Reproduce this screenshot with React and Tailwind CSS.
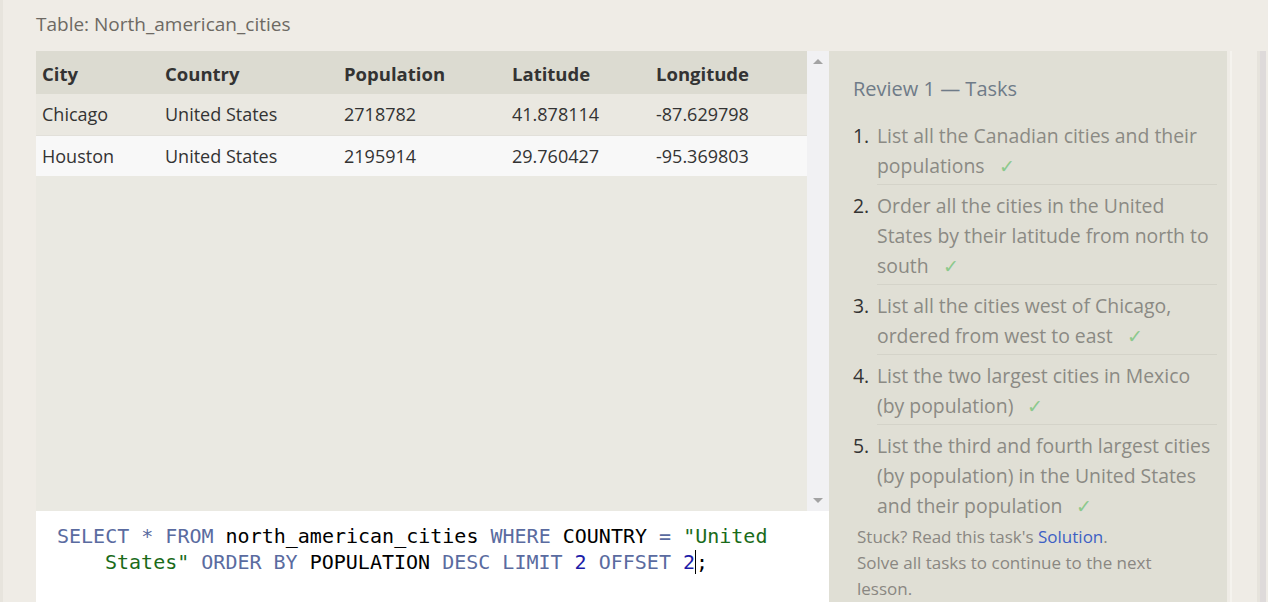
import React from 'react';

const rows = [
    { city: 'Chicago', country: 'United States', population: '2718782', lat: '41.878114', lng: '-87.629798' },
    { city: 'Houston', country: 'United States', population: '2195914', lat: '29.760427', lng: '-95.369803' }
];

const tasks = [
    ['List all the Canadian cities and their', 'populations'],
    ['Order all the cities in the United', 'States by their latitude from north to', 'south'],
    ['List all the cities west of Chicago,', 'ordered from west to east'],
    ['List the two largest cities in Mexico', '(by population)'],
    ['List the third and fourth largest cities', '(by population) in the United States', 'and their population']
];

const colWidths = ['w-[123px]', 'w-[179px]', 'w-[168px]', 'w-[144px]', 'w-[157px]'];

function Check() {
    return <span className="ml-[14px] text-[#8cc98c]">✓</span>;
}

function App() {
    return (
        <div className="flex h-[602px] w-full overflow-hidden bg-[#efece6]" style={{ fontFamily: '"Open Sans", "Noto Sans", sans-serif' }}>
            <div className="w-[3px] bg-[#e7e4dd]"></div>
            <div className="flex-1 pl-[33px]">
                <div className="h-[51px] pt-[9px] text-[19px] leading-[30px] text-[#6d6963]">Table: North_american_cities</div>
                <div className="flex">
                    <div className="flex w-[793px] flex-col">
                        <div className="flex h-[460px]">
                            <div className="w-[771px] bg-[#eae9e2] text-[18px] text-[#333]">
                                <div className="flex h-[43px] items-center bg-[#dcdbd1] pt-[3px] text-[18.5px] font-bold">
                                    {['City', 'Country', 'Population', 'Latitude', 'Longitude'].map((h, i) => (
                                        <div key={h} className={`${colWidths[i]} pl-[6px]`}>{h}</div>
                                    ))}
                                </div>
                                {rows.map((r, idx) => (
                                    <div key={r.city} className={`flex h-[41px] items-center ${idx === 1 ? 'border-t border-[#e2e0da] bg-[#f8f8f8]' : 'bg-[#eae8e1]'}`}>
                                        {[r.city, r.country, r.population, r.lat, r.lng].map((v, i) => (
                                            <div key={i} className={`${colWidths[i]} pl-[6px]`}>{v}</div>
                                        ))}
                                    </div>
                                ))}
                            </div>
                            <div className="flex w-[22px] flex-col items-center justify-between bg-[#f1f1f3] py-[8px]">
                                <div className="h-0 w-0 border-x-[5px] border-b-[5px] border-x-transparent border-b-[#a3a3a3]"></div>
                                <div className="h-0 w-0 border-x-[5px] border-t-[5px] border-x-transparent border-t-[#a3a3a3]"></div>
                            </div>
                        </div>
                        <div className="flex-1 bg-white pl-[21px] pt-[12px] text-[20px] leading-[26px]" style={{ fontFamily: '"DejaVu Sans Mono", "Liberation Mono", monospace' }}>
                            <div>
                                <span className="text-[#5a6ba0]">SELECT * FROM </span>
                                <span className="text-black">north_american_cities </span>
                                <span className="text-[#5a6ba0]">WHERE </span>
                                <span className="text-black">COUNTRY </span>
                                <span className="text-[#5a6ba0]">= </span>
                                <span className="text-[#1a6b1a]">"United</span>
                            </div>
                            <div className="pl-[48px]">
                                <span className="text-[#1a6b1a]">States" </span>
                                <span className="text-[#5a6ba0]">ORDER BY </span>
                                <span className="text-black">POPULATION </span>
                                <span className="text-[#5a6ba0]">DESC LIMIT </span>
                                <span className="text-[#1c1ca8]">2 </span>
                                <span className="text-[#5a6ba0]">OFFSET </span>
                                <span className="text-[#1c1ca8]">2</span>
                                <span className="border-l border-black text-black">;</span>
                            </div>
                        </div>
                    </div>
                    <div className="h-[551px] w-[398px] bg-[#e0dfd5] pl-[24px] pr-[10px] pt-[23px]">
                        <div className="text-[20px] leading-[30px] text-[#6f7b88]">Review 1 — Tasks</div>
                        <ol className="mt-[11px] text-[19.4px] leading-[30px]">
                            {tasks.map((t, i) => (
                                <li key={i} className="flex pt-[6px]">
                                    <span className="w-[24px] text-[#333]">{i + 1}.</span>
                                    <div className={`flex-1 pb-[3px] text-[#8b8a84] ${i < tasks.length - 1 ? 'border-b border-[#d4d3c9]' : ''}`}>
                                        {t.map((line, j) => (
                                            <div key={j}>
                                                {line}
                                                {j === t.length - 1 && <Check />}
                                            </div>
                                        ))}
                                    </div>
                                </li>
                            ))}
                        </ol>
                        <div className="text-[17px] leading-[26px] text-[#8a8782]">
                            <div className="pl-[4px]">Stuck? Read this task's <span className="text-[#3d5fc4]">Solution</span>.</div>
                            <div className="pl-[4px]">Solve all tasks to continue to the next</div>
                            <div className="pl-[4px]">lesson.</div>
                        </div>
                    </div>
                    <div className="ml-[3px] w-[27px] border-l-2 border-[#f5f3ee]"></div>
                    <div className="w-[3px] bg-[#e6e3dc]"></div>
                    <div className="w-[6px] bg-[#dedada]"></div>
                </div>
            </div>
        </div>
    );
}

export default App;
